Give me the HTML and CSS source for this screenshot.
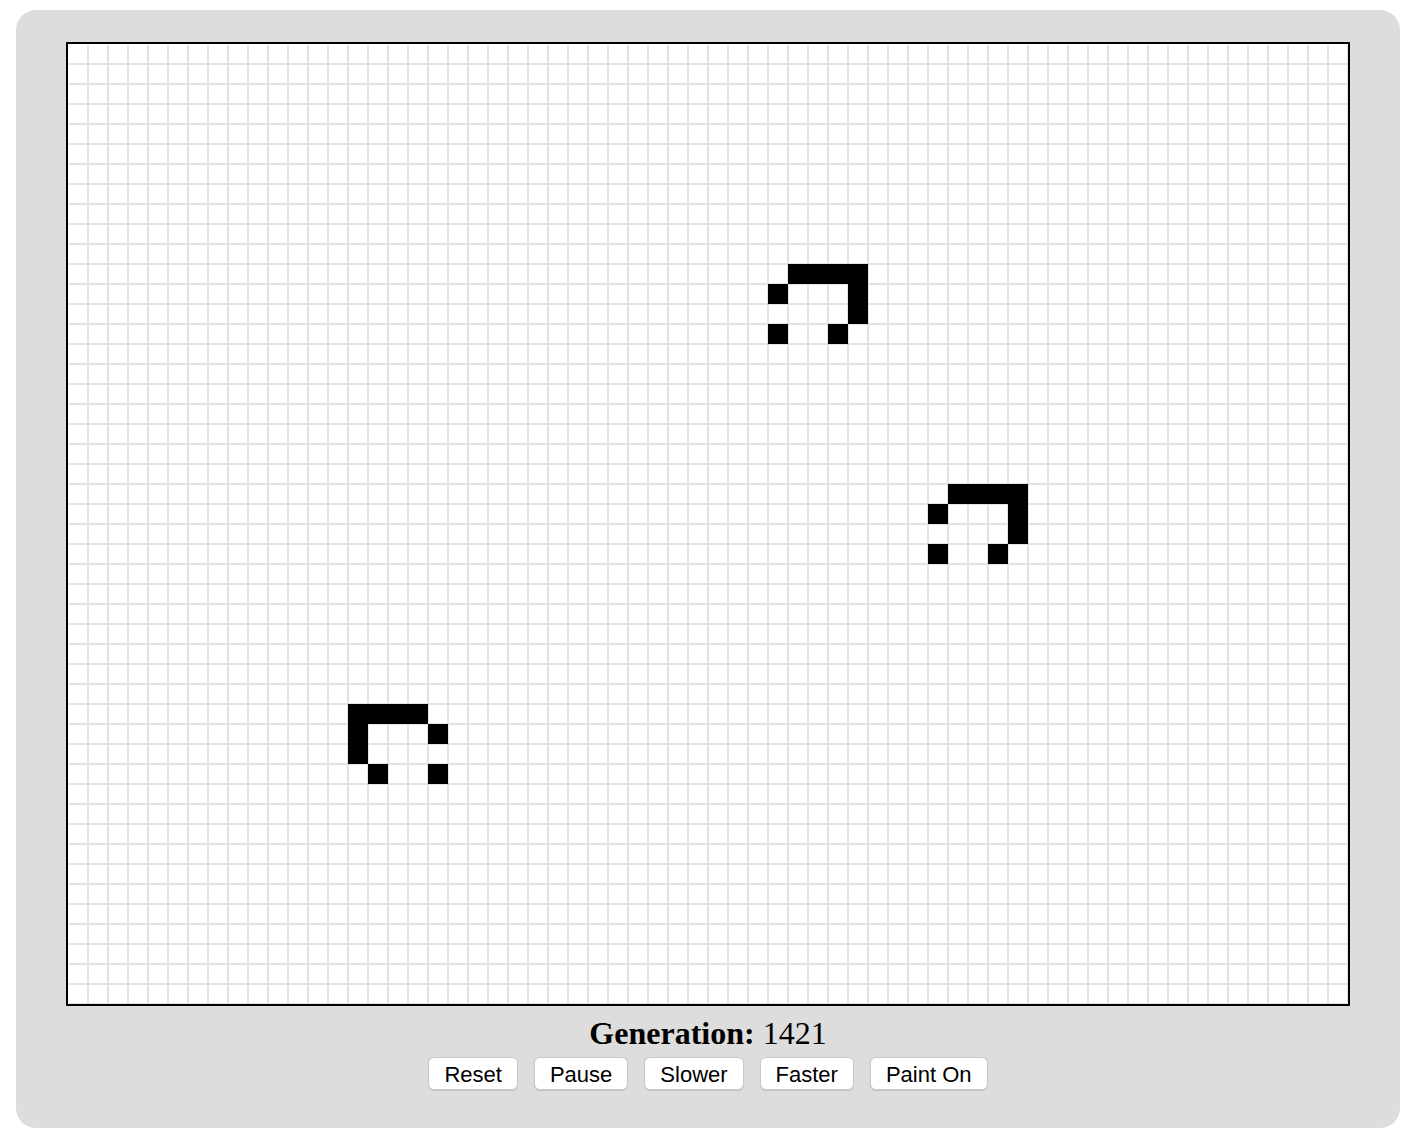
FILE: index.html
```html
<!DOCTYPE html>
<html>
<head>
<meta charset="utf-8">
<title>Game of Life</title>
<link rel="stylesheet" href="styles.css">
</head>
<body>
<div class="app">
  <div class="board">
    <svg class="cells" width="1280" height="960" viewBox="0 0 1280 960" xmlns="http://www.w3.org/2000/svg">
      <g fill="#000">
        <!-- spaceship 1 -->
        <rect x="720" y="220" width="80" height="20"/>
        <rect x="700" y="240" width="20" height="20"/>
        <rect x="780" y="240" width="20" height="40"/>
        <rect x="700" y="280" width="20" height="20"/>
        <rect x="760" y="280" width="20" height="20"/>
        <!-- spaceship 2 -->
        <rect x="880" y="440" width="80" height="20"/>
        <rect x="860" y="460" width="20" height="20"/>
        <rect x="940" y="460" width="20" height="40"/>
        <rect x="860" y="500" width="20" height="20"/>
        <rect x="920" y="500" width="20" height="20"/>
        <!-- spaceship 3 -->
        <rect x="280" y="660" width="80" height="20"/>
        <rect x="280" y="680" width="20" height="40"/>
        <rect x="360" y="680" width="20" height="20"/>
        <rect x="300" y="720" width="20" height="20"/>
        <rect x="360" y="720" width="20" height="20"/>
      </g>
    </svg>
  </div>
  <div class="generation"><b>Generation:</b> 1421</div>
  <div class="controls">
    <button class="btn">Reset</button>
    <button class="btn">Pause</button>
    <button class="btn">Slower</button>
    <button class="btn">Faster</button>
    <button class="btn">Paint On</button>
  </div>
</div>
</body>
</html>
```
FILE: styles.css
```css
html, body {
  margin: 0;
  padding: 0;
  background: #fff;
}

body {
  padding-top: 10px;
  font-family: "Liberation Serif", "Times New Roman", serif;
}

.app {
  width: 1384px;
  margin-left: 16px;
  box-sizing: border-box;
  background: #dddddd;
  border-radius: 20px;
  padding: 32px 0 38px;
  display: flex;
  flex-direction: column;
  align-items: center;
}

.board {
  width: 1280px;
  height: 960px;
  border: 2px solid #000;
  background-color: #fff;
  background-image:
    linear-gradient(#fff, #fff),
    linear-gradient(#fff, #fff),
    linear-gradient(to right, #e3e3e3 2px, transparent 2px),
    linear-gradient(to bottom, #e3e3e3 2px, transparent 2px);
  background-size: 1px 100%, 100% 1px, 20px 20px, 20px 20px;
  background-position: 0 0, 0 0, 19px 0, 0 19px;
  background-repeat: no-repeat, no-repeat, repeat, repeat;
}

.cells {
  display: block;
}

.generation {
  margin-top: 9px;
  font-size: 32px;
  line-height: 36px;
  color: #000;
}

.generation b {
  font-weight: bold;
}

.controls {
  margin-top: 6px;
  display: flex;
  gap: 16px;
}

.btn {
  box-sizing: border-box;
  font-family: "Liberation Sans", Arial, sans-serif;
  font-size: 22px;
  height: 33px;
  padding: 3px 15px 0;
  background: #fff;
  color: #000;
  border: 1px solid #c9c9c9;
  border-radius: 6px;
  box-shadow: 0 1px 1px rgba(0, 0, 0, 0.12);
  line-height: 28px;
  cursor: pointer;
}
```
